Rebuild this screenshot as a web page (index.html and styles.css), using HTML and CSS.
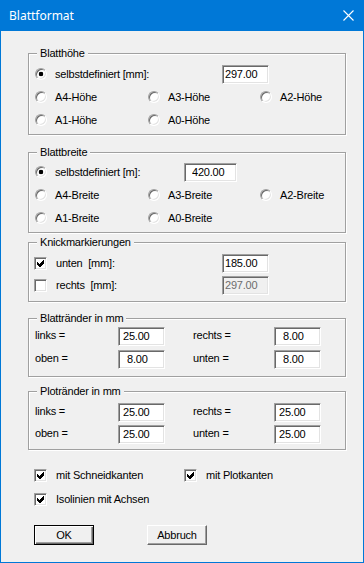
FILE: index.html
```html
<!DOCTYPE html>
<html lang="de">
<head>
  <meta charset="utf-8" />
  <title>Blattformat</title>
  <link rel="stylesheet" href="styles.css">
</head>
<body>
  <div class="window">
    <header class="titlebar">
      <span class="title">Blattformat</span>
      <svg class="close" width="11" height="11" viewBox="0 0 11 11">
        <path d="M0.5 0.5 L10.5 10.5 M10.5 0.5 L0.5 10.5" stroke="#fff" stroke-width="1.1" fill="none"/>
      </svg>
    </header>

    <main class="content">
      <!-- Blatthoehe -->
      <section class="group g-hoehe">
        <span class="group-title">Blatthöhe</span>
        <div class="row">
          <label class="choice w-187"><span class="radio on"></span>selbstdefiniert [mm]:</label>
          <input class="field" type="text" value="297.00">
        </div>
        <div class="row">
          <label class="choice w-113"><span class="radio"></span>A4-Höhe</label>
          <label class="choice w-112"><span class="radio"></span>A3-Höhe</label>
          <label class="choice"><span class="radio"></span>A2-Höhe</label>
        </div>
        <div class="row">
          <label class="choice w-113"><span class="radio"></span>A1-Höhe</label>
          <label class="choice"><span class="radio"></span>A0-Höhe</label>
        </div>
      </section>

      <!-- Blattbreite -->
      <section class="group g-breite">
        <span class="group-title">Blattbreite</span>
        <div class="row">
          <label class="choice w-149"><span class="radio on"></span>selbstdefiniert [m]:</label>
          <input class="field wide pad-8" type="text" value="420.00">
        </div>
        <div class="row">
          <label class="choice w-113"><span class="radio"></span>A4-Breite</label>
          <label class="choice w-112"><span class="radio"></span>A3-Breite</label>
          <label class="choice"><span class="radio"></span>A2-Breite</label>
        </div>
        <div class="row">
          <label class="choice w-113"><span class="radio"></span>A1-Breite</label>
          <label class="choice"><span class="radio"></span>A0-Breite</label>
        </div>
      </section>

      <!-- Knickmarkierungen -->
      <section class="group g-knick">
        <span class="group-title">Knickmarkierungen</span>
        <div class="row">
          <label class="choice w-187">
            <span class="check"><svg width="7" height="7" viewBox="0 0 7 7"><polygon points="0,2 2,4 6,0 7,0 7,3 3,7 2,7 0,5" fill="#000"/></svg></span>unten&nbsp; [mm]:
          </label>
          <input class="field" type="text" value="185.00">
        </div>
        <div class="row">
          <label class="choice w-187"><span class="check"></span>rechts&nbsp; [mm]:</label>
          <input class="field" type="text" value="297.00" disabled>
        </div>
      </section>

      <!-- Blattraender -->
      <section class="group g-blatt">
        <span class="group-title">Blattränder in mm</span>
        <div class="row">
          <span class="caption">links =</span>
          <input class="field pad-5" type="text" value="25.00">
          <span class="caption right">rechts =</span>
          <input class="field pad-9" type="text" value="8.00">
        </div>
        <div class="row">
          <span class="caption">oben =</span>
          <input class="field pad-9" type="text" value="8.00">
          <span class="caption right">unten =</span>
          <input class="field pad-9" type="text" value="8.00">
        </div>
      </section>

      <!-- Plotraender -->
      <section class="group g-plot">
        <span class="group-title">Plotränder in mm</span>
        <div class="row">
          <span class="caption">links =</span>
          <input class="field pad-5" type="text" value="25.00">
          <span class="caption right">rechts =</span>
          <input class="field pad-5" type="text" value="25.00">
        </div>
        <div class="row">
          <span class="caption">oben =</span>
          <input class="field pad-5" type="text" value="25.00">
          <span class="caption right">unten =</span>
          <input class="field pad-5" type="text" value="25.00">
        </div>
      </section>

      <div class="options">
        <div class="row">
          <label class="choice w-150">
            <span class="check"><svg width="7" height="7" viewBox="0 0 7 7"><polygon points="0,2 2,4 6,0 7,0 7,3 3,7 2,7 0,5" fill="#000"/></svg></span>mit Schneidkanten
          </label>
          <label class="choice">
            <span class="check"><svg width="7" height="7" viewBox="0 0 7 7"><polygon points="0,2 2,4 6,0 7,0 7,3 3,7 2,7 0,5" fill="#000"/></svg></span>mit Plotkanten
          </label>
        </div>
        <div class="row">
          <label class="choice">
            <span class="check"><svg width="7" height="7" viewBox="0 0 7 7"><polygon points="0,2 2,4 6,0 7,0 7,3 3,7 2,7 0,5" fill="#000"/></svg></span>Isolinien mit Achsen
          </label>
        </div>
      </div>

      <div class="buttons">
        <button class="btn default" type="button">OK</button>
        <button class="btn" type="button">Abbruch</button>
      </div>
    </main>
  </div>
</body>
</html>
```

FILE: styles.css
```css
/* Base */
body {
  margin: 0;
  background: #f0f0f0;
  font-family: "Liberation Sans", Arial, sans-serif;
  font-size: 11px;
  letter-spacing: -0.2px;
  color: #000;
}

.window {
  box-sizing: border-box;
  width: 364px;
  height: 563px;
  border: 1px solid #0078d7;
  border-top: 0;
  background: #f0f0f0;
}

/* Title bar */
.titlebar {
  height: 31px;
  display: flex;
  align-items: center;
  justify-content: space-between;
  padding: 0 9px 0 8px;
  background: #0078d7;
  color: #fff;
  font-family: "Noto Sans", "Open Sans", sans-serif;
  font-size: 12px;
  letter-spacing: 0;
}

.close {
  display: block;
}

.content {
  padding: 22px 0 0 27px;
}

/* Group boxes */
.group {
  position: relative;
  box-sizing: border-box;
  width: 318px;
  display: flex;
  flex-direction: column;
  gap: 1px;
  padding: 9px 0 3px 6px;
  border: 1px solid #a0a0a0;
  box-shadow: inset 1px 1px #fff, 1px 1px #fff;
}

.group-title {
  position: absolute;
  top: -8px;
  left: 8px;
  padding: 0 3px;
  line-height: 14px;
  background: #f0f0f0;
}

.g-hoehe  { margin-bottom: 17px; }
.g-breite { margin-bottom: 9px; padding-top: 8px; }
.g-knick  { margin-bottom: 16px; gap: 0; padding-bottom: 5px; }
.g-blatt  { margin-bottom: 14px; padding-top: 6px; padding-bottom: 6px; }
.g-plot   { gap: 0; padding-bottom: 4px; }

.row {
  display: flex;
  align-items: center;
  height: 22px;
}

.choice {
  display: flex;
  align-items: center;
  white-space: nowrap;
}

.w-113 { width: 113px; }
.w-112 { width: 112px; }
.w-149 { width: 149px; }
.w-150 { width: 150px; }
.w-187 { width: 187px; }

/* Classic radio + check box */
.radio {
  flex: none;
  box-sizing: border-box;
  width: 12px;
  height: 12px;
  margin-right: 8px;
  border-radius: 50%;
  border: 1px solid;
  border-color: #a0a0a0 #fff #fff #a0a0a0;
  box-shadow: inset 1px 1px #696969, inset -1px -1px #e3e3e3;
  background: #fff;
}

.radio.on {
  background: radial-gradient(circle, #000 0, #000 2px, #fff 2.6px);
}

.check {
  flex: none;
  box-sizing: border-box;
  width: 13px;
  height: 13px;
  margin: 0 9px 0 -1px;
  display: flex;
  align-items: center;
  justify-content: center;
  border: 1px solid;
  border-color: #a0a0a0 #fff #fff #a0a0a0;
  box-shadow: inset 1px 1px #696969, inset -1px -1px #e3e3e3;
  background: #fff;
}

.check svg {
  display: block;
  shape-rendering: crispEdges;
}

/* Edit fields */
.field {
  box-sizing: border-box;
  width: 47px;
  height: 19px;
  margin: 0;
  padding: 0 0 0 2px;
  border: 1px solid;
  border-color: #a0a0a0 #fff #fff #a0a0a0;
  box-shadow: inset 1px 1px #696969, inset -1px -1px #e3e3e3;
  background: #fff;
  color: #000;
  font: inherit;
  letter-spacing: inherit;
  outline: none;
}

.field.wide { width: 53px; }
.field.pad-5 { padding-left: 4px; }
.field.pad-8 { padding-left: 7px; }
.field.pad-9 { padding-left: 8px; }

.field:disabled {
  background: #f0f0f0;
  color: #6d6d6d;
}

.caption {
  width: 83px;
  align-self: flex-start;
  line-height: 20px;
}

.caption.right {
  width: 81px;
  margin-left: 28px;
}

/* Bottom options */
.options {
  display: flex;
  flex-direction: column;
  gap: 2px;
  margin-top: 14px;
  padding-left: 7px;
}

.buttons {
  display: flex;
  gap: 53px;
  margin-top: 15px;
  padding-left: 6px;
}

.btn {
  box-sizing: border-box;
  width: 60px;
  height: 20px;
  margin: 0;
  padding: 0;
  border: 1px solid;
  border-color: #fff #696969 #696969 #fff;
  box-shadow: inset -1px -1px #a0a0a0;
  background: #f0f0f0;
  color: #000;
  font: inherit;
  letter-spacing: inherit;
}

.btn.default {
  border-color: #000;
  box-shadow: inset 1px 1px #fff, inset -1px -1px #696969, inset -2px -2px #a0a0a0;
}
```
